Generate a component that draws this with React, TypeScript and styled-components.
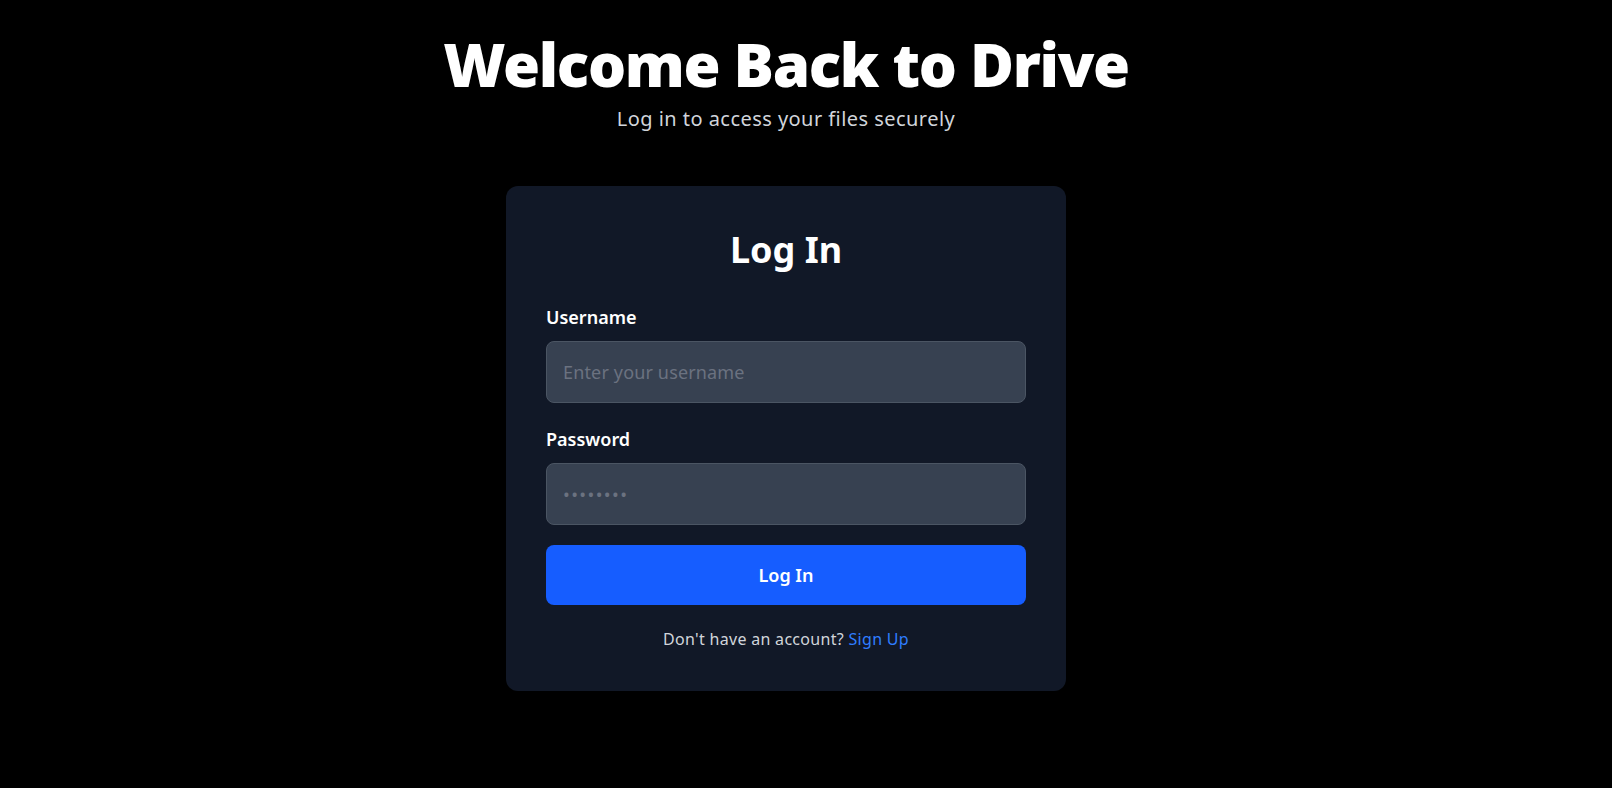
import styled, { createGlobalStyle } from "styled-components"

const GlobalStyle = createGlobalStyle`
    * { box-sizing: border-box; }
    html, body {
        margin: 0;
        padding: 0;
        background: #000000;
        font-family: "Noto Sans", "Open Sans", sans-serif;
    }
`

const Page = styled.div`
    min-height: 788px;
    display: flex;
    flex-direction: column;
    align-items: center;
    padding: 34px 40px 0 0;
    background: #000000;
`
const Title = styled.h1`
    margin: 0;
    font-size: 60px;
    line-height: 60px;
    font-weight: 900;
    color: #ffffff;
    letter-spacing: -1.3px;
`
const Subtitle = styled.p`
    margin: 11px 0 0;
    font-size: 20px;
    line-height: 28px;
    letter-spacing: 0.45px;
    color: #d1d5db;
`
const Card = styled.div`
    width: 560px;
    margin-top: 53px;
    padding: 40px 40px 40px;
    background: #111827;
    border-radius: 12px;
`
const CardTitle = styled.h2`
    margin: 0 0 29px;
    text-align: center;
    font-size: 36px;
    line-height: 48px;
    font-weight: 700;
    color: #ffffff;
`
const Field = styled.div<{ $last?: boolean }>`
    display: flex;
    flex-direction: column;
    gap: 10px;
    margin-bottom: ${(p) => (p.$last ? "20px" : "22px")};
`
const Label = styled.label`
    font-size: 18px;
    line-height: 28px;
    font-weight: 600;
    color: #ffffff;
`
const Input = styled.input`
    width: 100%;
    height: 62px;
    padding: 0 16px;
    font-family: inherit;
    font-size: 18px;
    letter-spacing: 0.15px;
    color: #ffffff;
    background: #374151;
    border: 1px solid #4b5563;
    border-radius: 8px;
    outline: none;
    &::placeholder {
        color: #6b7280;
    }
    &[type="password"]::placeholder {
        letter-spacing: 1.4px;
    }
`
const SubmitButton = styled.button`
    width: 100%;
    height: 60px;
    border: none;
    border-radius: 8px;
    background: #165dff;
    color: #ffffff;
    font-family: inherit;
    font-size: 18px;
    font-weight: 600;
    cursor: pointer;
`
const Footer = styled.p`
    margin: 22px 0 0;
    text-align: center;
    font-size: 16px;
    line-height: 24px;
    letter-spacing: 0.3px;
    color: #d1d5db;
`
const SignUpLink = styled.a`
    color: #2f7dff;
    text-decoration: none;
    cursor: pointer;
`

export default function App() {
    return (
        <>
            <GlobalStyle />
            <Page>
                <Title>Welcome Back to Drive</Title>
                <Subtitle>Log in to access your files securely</Subtitle>
                <Card>
                    <CardTitle>Log In</CardTitle>
                    <Field>
                        <Label htmlFor="username">Username</Label>
                        <Input id="username" type="text" placeholder="Enter your username" />
                    </Field>
                    <Field $last>
                        <Label htmlFor="password">Password</Label>
                        <Input id="password" type="password" placeholder="••••••••" />
                    </Field>
                    <SubmitButton>Log In</SubmitButton>
                    <Footer>
                        Don't have an account? <SignUpLink>Sign Up</SignUpLink>
                    </Footer>
                </Card>
            </Page>
        </>
    )
}
